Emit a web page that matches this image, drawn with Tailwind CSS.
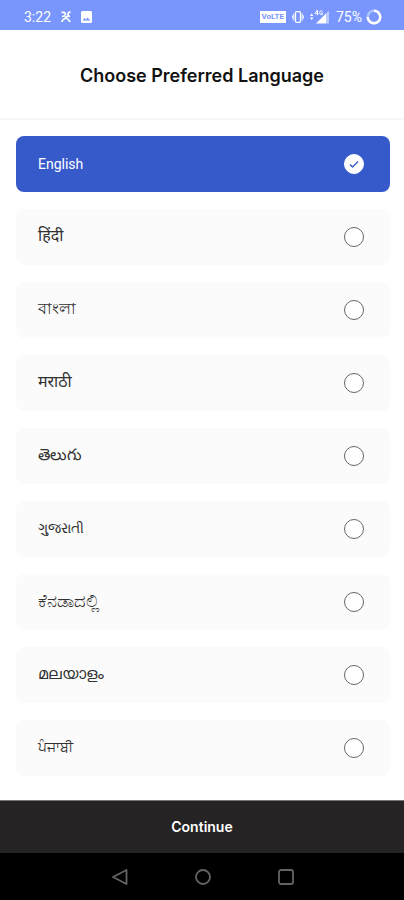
<!DOCTYPE html>
<html lang="en">
<head>
  <meta charset="UTF-8" />
  <meta name="viewport" content="width=device-width, initial-scale=1.0"/>
  <title>Choose Preferred Language</title>
  <script src="https://cdn.jsdelivr.net/npm/@tailwindcss/browser@4"></script>
</head>
<body class="bg-white font-[Roboto,'Noto_Sans',sans-serif] text-[#303030]">

  <form class="flex flex-col min-h-screen">

    <!-- Status bar -->
    <div class="h-[30px] bg-[#7896fe] text-white flex items-center justify-between pt-1 pl-6 pr-[22px]">
      <div class="flex items-center gap-[10px]">
        <span class="text-sm">3:22</span>
        <svg class="w-[10px] h-3" viewBox="0 0 10 12" fill="none" stroke="currentColor" stroke-width="1.7">
          <path d="M.5 1.300h2c1.500 0 2.200 1 1.700 2.400S2.500 5.500 1 5.500M9.500.8C8 1 7 2.200 7 3.500s.6 2 2 2M1 11c.2-2 1-2.800 3-3.500L6.500 5M4 5.500l3 3c.6.600 1 1.500 2.500 2.300" />
        </svg>
        <svg class="w-[11px] h-3" viewBox="0 0 11 12">
          <rect width="11" height="12" rx="1.500" fill="currentColor" />
          <path d="M1.500 9.500l2-2.500L5 8.500 6.500 6.500l3 3z" fill="#7896fe" />
        </svg>
      </div>
      <div class="flex items-center gap-[6px]">
        <span class="bg-white text-[#7896fe] text-[8px] leading-3 font-bold px-[2px]">VoLTE</span>
        <svg class="w-3 h-3" viewBox="0 0 12 12" fill="none" stroke="currentColor">
          <rect x="3.500" y=".7" width="5" height="10.600" rx="1" stroke-width="1.300" />
          <path d="M1.800 2.500v7M10.200 2.500v7M.3 4.500v3M11.700 4.500v3" />
        </svg>
        <svg class="w-5 h-[14px]" viewBox="0 0 20 14" fill="currentColor">
          <path d="M0 6l1.700-2.500L3.400 6zM0 7.500h3.400L1.700 10z" />
          <path d="M7.500 0v5.200M5 3.600h3.600M5 3.600L7.500 0M12.500 1.300c-1.200-1.200-2.800-.6-2.800 1.400s1.700 2.500 2.800 1.500V3H11" fill="none" stroke="currentColor" />
          <path d="M16.500 3v10.500H6z" />
          <path d="M17 2.500l2-1.500v12.500h-2z" opacity=".5" />
        </svg>
        <div class="flex items-center gap-1">
          <span class="text-sm">75%</span>
          <svg class="w-4 h-4" viewBox="0 0 16 16" fill="none" stroke="currentColor" stroke-width="2.500">
            <circle cx="8" cy="8" r="6.300" opacity=".4" />
            <path d="M8 1.700A6.300 6.300 0 1 1 1.700 8" />
          </svg>
        </div>
      </div>
    </div>

    <header class="h-[90px] flex items-center justify-center pt-1 border-b-2 border-[#f7f7f7]">
      <h1 class="font-[Inter,sans-serif] text-lg font-semibold text-[#111111]">Choose Preferred Language</h1>
    </header>

    <main class="flex-1 flex flex-col gap-[17px] pl-4 pr-[14px] pt-4 pb-6 text-base leading-6">
      <label class="h-14 flex items-center justify-between rounded-lg bg-[#fbfbfb] pl-[22px] pr-[26px] has-checked:bg-[#375acb] has-checked:text-white">
        <span class="text-sm">English</span>
        <span class="relative flex">
          <input type="radio" name="language" value="en" checked class="peer appearance-none w-5 h-5 rounded-full border border-[#666666] bg-white checked:border-white" />
          <svg class="hidden peer-checked:block absolute inset-0 w-5 h-5 pointer-events-none" viewBox="0 0 20 20" fill="none" stroke="#375acb" stroke-width="1.300"><path d="M6 10.500l2.500 2.500L14 7.500" /></svg>
        </span>
      </label>
      <label class="h-14 flex items-center justify-between rounded-lg bg-[#fbfbfb] pl-[22px] pr-[26px] has-checked:bg-[#375acb] has-checked:text-white">
        <span lang="hi" class="pb-[2px]">हिंदी</span>
        <span class="relative flex">
          <input type="radio" name="language" value="hi" class="peer appearance-none w-5 h-5 rounded-full border border-[#666666] bg-white checked:border-white" />
          <svg class="hidden peer-checked:block absolute inset-0 w-5 h-5 pointer-events-none" viewBox="0 0 20 20" fill="none" stroke="#375acb" stroke-width="1.300"><path d="M6 10.500l2.500 2.500L14 7.500" /></svg>
        </span>
      </label>
      <label class="h-14 flex items-center justify-between rounded-lg bg-[#fbfbfb] pl-[22px] pr-[26px] has-checked:bg-[#375acb] has-checked:text-white">
        <span lang="bn" class="pb-[2px] font-medium">বাংলা</span>
        <span class="relative flex">
          <input type="radio" name="language" value="bn" class="peer appearance-none w-5 h-5 rounded-full border border-[#666666] bg-white checked:border-white" />
          <svg class="hidden peer-checked:block absolute inset-0 w-5 h-5 pointer-events-none" viewBox="0 0 20 20" fill="none" stroke="#375acb" stroke-width="1.300"><path d="M6 10.500l2.500 2.500L14 7.500" /></svg>
        </span>
      </label>
      <label class="h-14 flex items-center justify-between rounded-lg bg-[#fbfbfb] pl-[22px] pr-[26px] has-checked:bg-[#375acb] has-checked:text-white">
        <span lang="mr" class="pb-[2px]">मराठी</span>
        <span class="relative flex">
          <input type="radio" name="language" value="mr" class="peer appearance-none w-5 h-5 rounded-full border border-[#666666] bg-white checked:border-white" />
          <svg class="hidden peer-checked:block absolute inset-0 w-5 h-5 pointer-events-none" viewBox="0 0 20 20" fill="none" stroke="#375acb" stroke-width="1.300"><path d="M6 10.500l2.500 2.500L14 7.500" /></svg>
        </span>
      </label>
      <label class="h-14 flex items-center justify-between rounded-lg bg-[#fbfbfb] pl-[22px] pr-[26px] has-checked:bg-[#375acb] has-checked:text-white">
        <span lang="te" class="pb-[2px]">తెలుగు</span>
        <span class="relative flex">
          <input type="radio" name="language" value="te" class="peer appearance-none w-5 h-5 rounded-full border border-[#666666] bg-white checked:border-white" />
          <svg class="hidden peer-checked:block absolute inset-0 w-5 h-5 pointer-events-none" viewBox="0 0 20 20" fill="none" stroke="#375acb" stroke-width="1.300"><path d="M6 10.500l2.500 2.500L14 7.500" /></svg>
        </span>
      </label>
      <label class="h-14 flex items-center justify-between rounded-lg bg-[#fbfbfb] pl-[22px] pr-[26px] has-checked:bg-[#375acb] has-checked:text-white">
        <span lang="gu" class="pb-[2px] text-sm">ગુજરાતી</span>
        <span class="relative flex">
          <input type="radio" name="language" value="gu" class="peer appearance-none w-5 h-5 rounded-full border border-[#666666] bg-white checked:border-white" />
          <svg class="hidden peer-checked:block absolute inset-0 w-5 h-5 pointer-events-none" viewBox="0 0 20 20" fill="none" stroke="#375acb" stroke-width="1.300"><path d="M6 10.500l2.500 2.500L14 7.500" /></svg>
        </span>
      </label>
      <label class="h-14 flex items-center justify-between rounded-lg bg-[#fbfbfb] pl-[22px] pr-[26px] has-checked:bg-[#375acb] has-checked:text-white">
        <span lang="kn" class="pb-[2px] text-lg">ಕೆನಡಾದಲ್ಲಿ</span>
        <span class="relative flex">
          <input type="radio" name="language" value="kn" class="peer appearance-none w-5 h-5 rounded-full border border-[#666666] bg-white checked:border-white" />
          <svg class="hidden peer-checked:block absolute inset-0 w-5 h-5 pointer-events-none" viewBox="0 0 20 20" fill="none" stroke="#375acb" stroke-width="1.300"><path d="M6 10.500l2.500 2.500L14 7.500" /></svg>
        </span>
      </label>
      <label class="h-14 flex items-center justify-between rounded-lg bg-[#fbfbfb] pl-[22px] pr-[26px] has-checked:bg-[#375acb] has-checked:text-white">
        <span lang="ml" class="pb-[2px]">മലയാളം</span>
        <span class="relative flex">
          <input type="radio" name="language" value="ml" class="peer appearance-none w-5 h-5 rounded-full border border-[#666666] bg-white checked:border-white" />
          <svg class="hidden peer-checked:block absolute inset-0 w-5 h-5 pointer-events-none" viewBox="0 0 20 20" fill="none" stroke="#375acb" stroke-width="1.300"><path d="M6 10.500l2.500 2.500L14 7.500" /></svg>
        </span>
      </label>
      <label class="h-14 flex items-center justify-between rounded-lg bg-[#fbfbfb] pl-[22px] pr-[26px] has-checked:bg-[#375acb] has-checked:text-white">
        <span lang="pa" class="pb-[2px] text-sm">ਪੰਜਾਬੀ</span>
        <span class="relative flex">
          <input type="radio" name="language" value="pa" class="peer appearance-none w-5 h-5 rounded-full border border-[#666666] bg-white checked:border-white" />
          <svg class="hidden peer-checked:block absolute inset-0 w-5 h-5 pointer-events-none" viewBox="0 0 20 20" fill="none" stroke="#375acb" stroke-width="1.300"><path d="M6 10.500l2.500 2.500L14 7.500" /></svg>
        </span>
      </label>
    </main>

    <button type="button" class="w-full h-[53px] bg-[#252324] border-t border-[#777777] text-white font-[Inter,sans-serif] text-sm font-semibold">Continue</button>

    <!-- System navigation -->
    <nav class="h-[47px] bg-black text-[#636363] flex items-center justify-center gap-[67px] pl-[2px]">
      <button type="button" aria-label="Back">
        <svg class="w-4 h-4" viewBox="0 0 16 16" fill="none" stroke="currentColor" stroke-width="1.800" stroke-linejoin="round"><path d="M14.500 1v14L1 8z" /></svg>
      </button>
      <button type="button" aria-label="Home">
        <svg class="w-4 h-4" viewBox="0 0 16 16" fill="none" stroke="currentColor" stroke-width="1.800"><circle cx="8" cy="8" r="7" /></svg>
      </button>
      <button type="button" aria-label="Recent apps">
        <svg class="w-4 h-4" viewBox="0 0 16 16" fill="none" stroke="currentColor" stroke-width="1.800"><rect x="1" y="1" width="14" height="14" rx="2" /></svg>
      </button>
    </nav>
  </form>

</body>
</html>
